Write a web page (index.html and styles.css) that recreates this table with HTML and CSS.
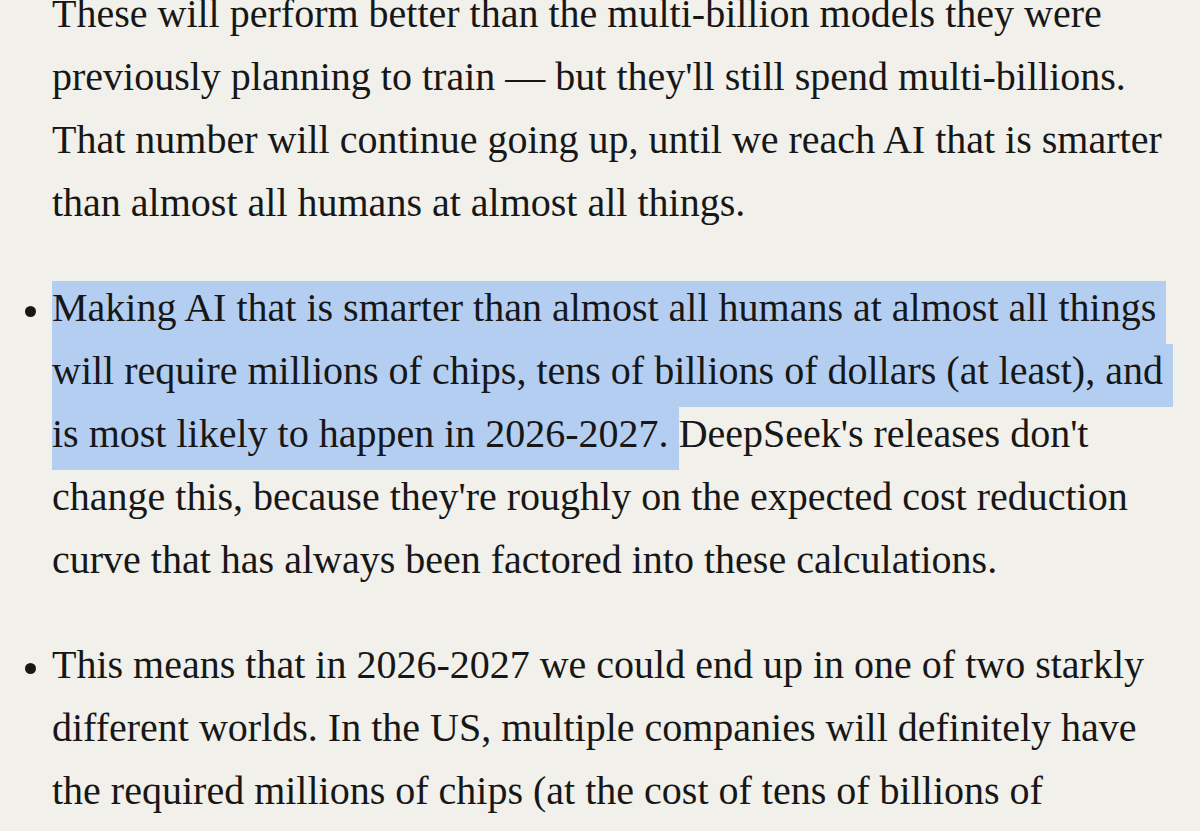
FILE: index.html
```html
<!DOCTYPE html>
<html lang="en">
<head>
<meta charset="utf-8">
<title>Article</title>
<link rel="stylesheet" href="styles.css">
</head>
<body>
<ul class="list">
  <li class="item item-cont">
    <span class="bullet-space"></span>
    <div class="text">
      <span class="line">These will perform better than the multi-billion models they were</span>
      <span class="line">previously planning to train — but they'll still spend multi-billions.</span>
      <span class="line">That number will continue going up, until we reach AI that is smarter</span>
      <span class="line">than almost all humans at almost all things.</span>
    </div>
  </li>
  <li class="item">
    <span class="bullet-space"><span class="bullet"></span></span>
    <div class="text">
      <span class="line"><span class="hl">Making AI that is smarter than almost all humans at almost all things </span></span>
      <span class="line"><span class="hl">will require millions of chips, tens of billions of dollars (at least), and </span></span>
      <span class="line"><span class="hl">is most likely to happen in 2026-2027. </span>DeepSeek's releases don't</span>
      <span class="line">change this, because they're roughly on the expected cost reduction</span>
      <span class="line">curve that has always been factored into these calculations.</span>
    </div>
  </li>
  <li class="item">
    <span class="bullet-space"><span class="bullet"></span></span>
    <div class="text">
      <span class="line">This means that in 2026-2027 we could end up in one of two starkly</span>
      <span class="line">different worlds. In the US, multiple companies will definitely have</span>
      <span class="line">the required millions of chips (at the cost of tens of billions of</span>
    </div>
  </li>
</ul>
</body>
</html>
```
FILE: styles.css
```css
html, body {
  margin: 0;
  padding: 0;
  background: #f1f0eb;
}
body {
  width: 1200px;
  height: 831px;
  overflow: hidden;
  font-family: "Liberation Serif", "DejaVu Serif", serif;
  color: #171717;
}
.list {
  list-style: none;
  margin: -18px 0 0 0;
  padding: 0;
  display: flex;
  flex-direction: column;
  gap: 42px;
}
.item {
  display: flex;
}
.bullet-space {
  flex: 0 0 52px;
  display: block;
}
.bullet {
  display: block;
  width: 11px;
  height: 11px;
  border-radius: 50%;
  background: #171717;
  margin: 30px 0 0 25px;
}
.text {
  font-size: 40px;
  line-height: 63px;
}
.line {
  display: block;
  height: 63px;
  white-space: nowrap;
}
.hl {
  display: inline-block;
  white-space: pre;
  line-height: 53px;
  padding-bottom: 10px;
  background: #b4cef2;
}
```
